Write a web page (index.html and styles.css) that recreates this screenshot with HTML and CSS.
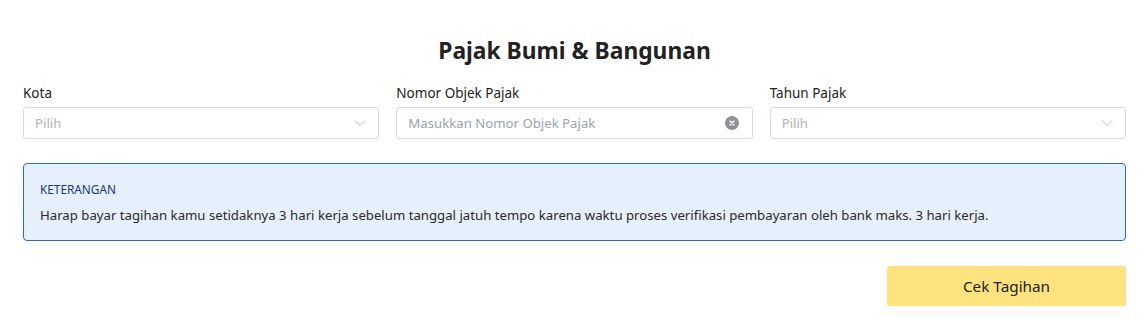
FILE: index.html
```html
<!DOCTYPE html>
<html lang="id">
<head>
<meta charset="utf-8">
<title>Pajak Bumi &amp; Bangunan</title>
<link rel="stylesheet" href="styles.css">
</head>
<body>
<main class="page">
  <h1 class="title">Pajak Bumi &amp; Bangunan</h1>
  <div class="fields">
    <div class="field">
      <label class="label">Kota</label>
      <div class="control">
        <span class="placeholder">Pilih</span>
        <svg class="chev" width="12" height="8" viewBox="0 0 12 8"><path d="M1 1.5 L6 6.5 L11 1.5" fill="none" stroke="#b5b9bf" stroke-width="1"/></svg>
      </div>
    </div>
    <div class="field">
      <label class="label">Nomor Objek Pajak</label>
      <div class="control">
        <span class="placeholder input-ph">Masukkan Nomor Objek Pajak</span>
        <svg class="clear" width="14" height="14" viewBox="0 0 14 14"><circle cx="7" cy="7" r="7" fill="#8e9196"/><path d="M5 5 L9 9 M9 5 L5 9" stroke="#fff" stroke-width="1.4" stroke-linecap="round"/></svg>
      </div>
    </div>
    <div class="field">
      <label class="label">Tahun Pajak</label>
      <div class="control">
        <span class="placeholder">Pilih</span>
        <svg class="chev" width="12" height="8" viewBox="0 0 12 8"><path d="M1 1.5 L6 6.5 L11 1.5" fill="none" stroke="#b5b9bf" stroke-width="1"/></svg>
      </div>
    </div>
  </div>
  <section class="info">
    <div class="info-title">KETERANGAN</div>
    <p class="info-text">Harap bayar tagihan kamu setidaknya 3 hari kerja sebelum tanggal jatuh tempo karena waktu proses verifikasi pembayaran oleh bank maks. 3 hari kerja.</p>
  </section>
  <div class="actions">
    <button class="btn">Cek Tagihan</button>
  </div>
</main>
</body>
</html>
```
FILE: styles.css
```css
* { box-sizing: border-box; }
html, body { margin: 0; padding: 0; background: #fff; }
body { font-family: "Noto Sans", "Open Sans", sans-serif; color: #222; }
.page { padding: 36px 18px 0 23px; }
.title {
  margin: 0;
  text-align: center;
  font-size: 22.8px;
  font-weight: 700;
  line-height: 30px;
  color: #222;
}
.fields {
  display: grid;
  grid-template-columns: 1fr 1fr 1fr;
  column-gap: 17px;
  margin-top: 18px;
}
.field { display: flex; flex-direction: column; }
.label { font-size: 13.5px; line-height: 18px; color: #222; margin-bottom: 5px; }
.control {
  height: 32px;
  border: 1px solid #d9d9d9;
  border-radius: 3px;
  display: flex;
  align-items: center;
  justify-content: space-between;
  padding: 0 11px 0 11px;
}
.placeholder { font-size: 13.2px; color: #b3b3b3; }
.input-ph { color: #9aa3ad; }
.chev { margin-right: 1px; }
.clear { margin-right: 2px; }
.info {
  margin-top: 24px;
  border: 1px solid #2e6cae;
  border-radius: 4px;
  background: #e6f0fc;
  padding: 17px 16px 16px 16px;
}
.info-title { font-size: 11.8px; line-height: 16px; color: #173a7a; }
.info-text { margin: 9px 0 0; font-size: 13.2px; line-height: 18px; color: #2a2a2a; }
.actions { display: flex; justify-content: flex-end; margin-top: 25px; }
.btn {
  width: 239px;
  height: 40px;
  border: none;
  border-radius: 3px;
  background: #fde27e;
  font-family: inherit;
  font-size: 15.3px;
  color: #222;
  box-shadow: 0 1px 2px rgba(0,0,0,0.08);
}
```
